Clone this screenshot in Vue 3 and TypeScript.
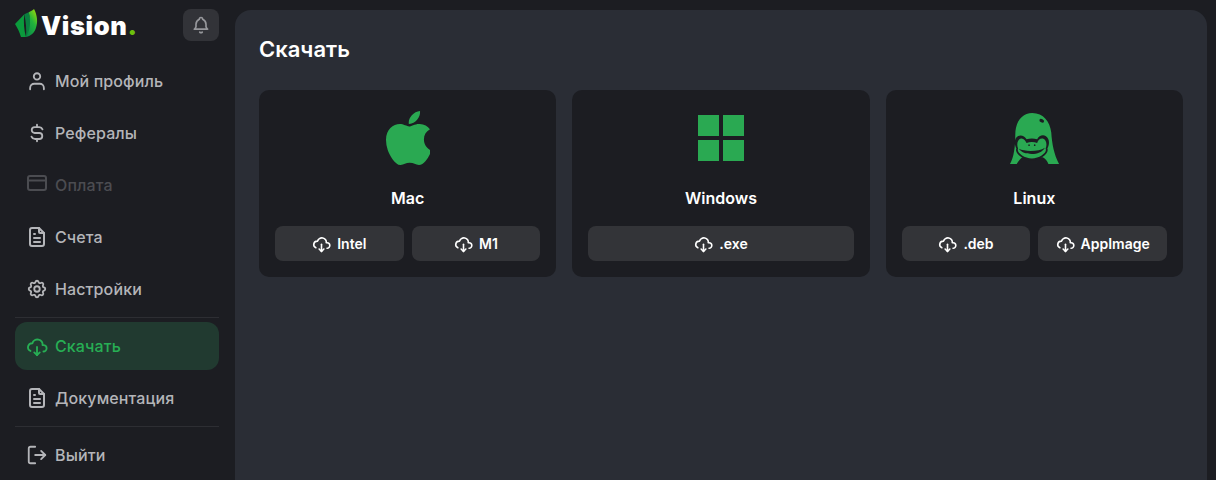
<script setup lang="ts">
type Item = { label: string; paths: string[]; state?: string; vb?: string; divider?: boolean };

const gear =
  "M10.325 4.317c.426 -1.756 2.924 -1.756 3.35 0a1.724 1.724 0 0 0 2.573 1.066c1.543 -.94 3.31 .826 2.37 2.37a1.724 1.724 0 0 0 1.065 2.572c1.756 .426 1.756 2.924 0 3.35a1.724 1.724 0 0 0 -1.066 2.573c.94 1.543 -.826 3.31 -2.37 2.37a1.724 1.724 0 0 0 -2.572 1.065c-.426 1.756 -2.924 1.756 -3.35 0a1.724 1.724 0 0 0 -2.573 -1.066c-1.543 .94 -3.31 -.826 -2.37 -2.37a1.724 1.724 0 0 0 -1.065 -2.572c-1.756 -.426 -1.756 -2.924 0 -3.35a1.724 1.724 0 0 0 1.066 -2.573c-.94 -1.543 .826 -3.31 2.37 -2.37c1 .608 2.296 .07 2.572 -1.065z";
const file = [
  "M14 3v4a1 1 0 0 0 1 1h4",
  "M17 21h-10a2 2 0 0 1 -2 -2v-14a2 2 0 0 1 2 -2h7l5 5v11a2 2 0 0 1 -2 2z",
  "M9 9h1M9 13h6M9 17h6",
];
const cloud = [
  "M19 18a3.5 3.5 0 0 0 0 -7h-1a5 4.5 0 0 0 -11 -2a4.6 4.4 0 0 0 -2.1 8.4",
  "M12 13v9",
  "M9 19l3 3l3 -3",
];

const items: Item[] = [
  { label: "Мой профиль", paths: ["M8.5 7a3.5 3.5 0 1 0 7 0a3.5 3.5 0 0 0 -7 0", "M4.5 21v-1.500a4.500 4.500 0 0 1 4.500 -4.500h6a4.500 4.500 0 0 1 4.500 4.500v1.500"] },
  { label: "Рефералы", paths: ["M18 8a4 4 0 0 0 -3.500 -2.500h-5a3.250 3.250 0 0 0 0 6.500h5a3.250 3.250 0 0 1 0 6.500h-5a4 4 0 0 1 -3.500 -2.500", "M12 3v2.500m0 13v2.500"] },
  { label: "Оплата", state: "disabled", vb: "1 1 22 22", paths: ["M3 7a2 2 0 0 1 2 -2h14a2 2 0 0 1 2 2v10a2 2 0 0 1 -2 2h-14a2 2 0 0 1 -2 -2z", "M3 9.500h18"] },
  { label: "Счета", paths: file, vb: "1 1 22 22" },
  { label: "Настройки", paths: [gear, "M9 12a3 3 0 1 0 6 0a3 3 0 0 0 -6 0"], divider: true },
  { label: "Скачать", state: "active", paths: cloud },
  { label: "Документация", paths: file, vb: "1 1 22 22", divider: true },
  { label: "Выйти", paths: ["M10 21H5a2 2 0 0 1 -2 -2V5a2 2 0 0 1 2 -2h5", "M16.500 16.500l4.500 -4.500l-4.500 -4.500", "M21 12H10"] },
];

const cards = [
  { name: "Mac", icon: "mac", buttons: ["Intel", "M1"] },
  { name: "Windows", icon: "win", buttons: [".exe"] },
  { name: "Linux", icon: "linux", buttons: [".deb", "AppImage"] },
];
</script>

<template>
  <div class="app">
    <aside class="side">
      <div class="head">
        <div class="logo">
          <svg class="leaf" width="23" height="28" viewBox="15 12 69 84">
            <defs>
              <linearGradient id="lg1" x1="0.85" y1="0" x2="0.25" y2="1">
                <stop offset="0" stop-color="#9ad80a" />
                <stop offset="0.45" stop-color="#22b23c" />
                <stop offset="1" stop-color="#0b8c48" />
              </linearGradient>
            </defs>
            <path d="M15 57L43 28C40 50 42 75 48 96L33 96C29 82 22 68 15 57Z" fill="#0b9a3c" />
            <path d="M43 28C48 52 50 76 48 96C56 90 60 84 62 70C63 54 60 36 56 22Z" fill="#0a7f3f" />
            <path d="M56 22C62 19 68 16 72 12C82 30 84 52 78 68C74 82 64 92 48 96C60 80 64 50 56 22Z" fill="url(#lg1)" />
          </svg>
          <span class="word">Vision<i>.</i></span>
        </div>
        <button class="bell">
          <svg width="20" height="20" viewBox="0 0 24 24" class="ic">
            <path d="M10 5a2 2 0 1 1 4 0a7 7 0 0 1 4 6v3a4 4 0 0 0 2 3h-16a4 4 0 0 0 2 -3v-3a7 7 0 0 1 4 -6" />
            <path d="M10.500 20.500a2 2 0 0 0 3 0" />
          </svg>
        </button>
      </div>
      <nav class="nav">
        <template v-for="it in items" :key="it.label">
          <a class="item" :class="it.state">
            <svg width="22" height="22" :viewBox="it.vb || '0 0 24 24'" class="ic">
              <path v-for="p in it.paths" :key="p" :d="p" />
            </svg>
            <span>{{ it.label }}</span>
          </a>
          <div v-if="it.divider" class="divider"></div>
        </template>
      </nav>
    </aside>
    <main class="main">
      <h1>Скачать</h1>
      <div class="grid">
        <section v-for="c in cards" :key="c.name" class="card">
          <div class="os">
            <svg v-if="c.icon === 'mac'" width="44" height="54" viewBox="4 32 365 448" fill="#2aa952">
              <path d="M318.700 268.700c-.2-36.700 16.400-64.400 50-84.800-18.800-26.900-47.200-41.700-84.700-44.600-35.500-2.800-74.300 20.700-88.500 20.700-15 0-49.400-19.700-76.400-19.700C63.300 141.200 4 184.800 4 273.500q0 39.300 14.400 81.200c12.800 36.700 59 126.700 107.200 125.200 25.200-.6 43-17.900 75.800-17.900 31.800 0 48.300 17.900 76.400 17.900 48.600-.7 90.400-82.500 102.600-119.300-65.200-30.700-61.700-90-61.700-91.900zm-56.600-164.200c27.300-32.400 24.800-61.900 24-72.500-24.100 1.400-52 16.400-67.900 34.900-17.500 19.800-27.800 44.300-25.600 71.900 26.100 2 49.900-11.400 69.500-34.300z" />
            </svg>
            <div v-else-if="c.icon === 'win'" class="win"><b></b><b></b><b></b><b></b></div>
            <svg v-else width="56" height="58" viewBox="0 0 168 174">
              <g transform="translate(-1.750 -1.300) scale(1.058 1.109)">
                <path fill="#2aa952" d="M13 150C24 130 28 105 28 70C28 35 48 12 76 12C108 12 126 35 130 65C132 95 138 125 152 150L122 150C118 142 114 136 106 132L48 132C42 136 38 142 32 150Z" />
                <ellipse cx="103" cy="33" rx="7" ry="4.500" fill="#1c1d22" transform="rotate(25 103 33)" />
                <path fill="#1c1d22" d="M31 108C24 96 25 80 36 74C45 70 55 75 60 83C69 80 81 80 90 83C95 74 106 69 115 75C125 81 126 96 119 108C125 120 100 140 75 140C50 140 25 120 31 108Z" />
                <path fill="#2aa952" d="M36 108C31 97 34 84 44 81C52 80 57 87 60 93C69 90 81 90 90 93C92 86 98 80 106 81C116 84 119 97 114 108C120 118 98 135 75 135C52 135 30 118 36 108Z" />
                <circle cx="67" cy="99" r="2.300" fill="#1c1d22" />
                <circle cx="83" cy="99" r="2.300" fill="#1c1d22" />
                <path fill="#1c1d22" d="M38 109C55 117 95 117 112 106C105 118 90 123 75 123C58 123 45 119 38 109Z" />
              </g>
            </svg>
          </div>
          <h2>{{ c.name }}</h2>
          <div class="btns">
            <button v-for="b in c.buttons" :key="b" class="btn">
              <svg width="19" height="19" viewBox="0 0 24 24" class="ic">
                <path v-for="p in cloud" :key="p" :d="p" />
              </svg>
              <span>{{ b }}</span>
            </button>
          </div>
        </section>
      </div>
    </main>
  </div>
</template>

<style scoped>
.app {
  display: flex;
  height: 480px;
  overflow: hidden;
  background: #1c1d22;
  font-family: Inter, "Noto Sans", sans-serif;
}
.side {
  width: 235px;
  flex: none;
  box-sizing: border-box;
  padding: 9px 16px 0 15px;
}
.head {
  display: flex;
  justify-content: space-between;
  align-items: flex-start;
  height: 32px;
  margin-bottom: 16px;
}
.logo {
  display: flex;
  align-items: flex-start;
  gap: 3px;
}
.word {
  font-size: 25.5px;
  line-height: 32px;
  font-weight: 900;
  color: #fff;
  margin-top: 1px;
  letter-spacing: 0.6px;
}
.word i {
  font-style: normal;
  color: #6cc00c;
}
.bell {
  width: 36px;
  height: 32px;
  padding: 0;
  border: 0;
  border-radius: 8px;
  background: #323338;
  color: #96979b;
  display: flex;
  align-items: center;
  justify-content: center;
}
.ic {
  fill: none;
  stroke: currentColor;
  stroke-width: 2;
  stroke-linecap: round;
  stroke-linejoin: round;
  flex: none;
}
.nav {
  display: flex;
  flex-direction: column;
  gap: 4px;
}
.item {
  height: 48px;
  border-radius: 12px;
  display: flex;
  align-items: center;
  gap: 7px;
  padding-left: 11px;
  color: #b4b5b9;
  font-size: 16px;
  font-weight: 500;
  letter-spacing: 0.12px;
}
.item.disabled {
  color: #4b4c51;
}
.item.disabled .ic {
  margin-top: -4px;
}
.item.active {
  background: #213a30;
  color: #27ae54;
}
.divider {
  height: 1px;
  background: #2d2e33;
}
.main {
  flex: none;
  width: 972px;
  height: 600px;
  margin-top: 10px;
  box-sizing: border-box;
  padding: 23px 24px 24px;
  background: #2a2d35;
  border-radius: 16px;
}
h1 {
  margin: 0 0 25px;
  font-size: 22px;
  line-height: 32px;
  font-weight: 600;
  color: #fff;
}
.grid {
  display: grid;
  grid-template-columns: repeat(3, 1fr);
  gap: 16px;
}
.card {
  height: 187px;
  box-sizing: border-box;
  background: #1c1d22;
  border-radius: 10px;
  padding: 16px;
  display: flex;
  flex-direction: column;
  align-items: center;
}
.os {
  height: 64px;
  display: flex;
  align-items: center;
  justify-content: center;
}
.win {
  display: grid;
  grid-template-columns: 21px 21px;
  gap: 4px;
}
.win b {
  height: 21px;
  background: #2aa952;
}
h2 {
  margin: 16px 0 0;
  font-size: 16px;
  line-height: 24px;
  font-weight: 600;
  color: #fff;
}
.btns {
  display: flex;
  gap: 8px;
  width: 100%;
  margin-top: auto;
}
.btn {
  flex: 1;
  height: 35px;
  border: 0;
  border-radius: 8px;
  background: #333438;
  color: #fff;
  font: 600 14px Inter, "Noto Sans", sans-serif;
  display: flex;
  align-items: center;
  justify-content: center;
  gap: 6px;
  padding: 0;
}
</style>
